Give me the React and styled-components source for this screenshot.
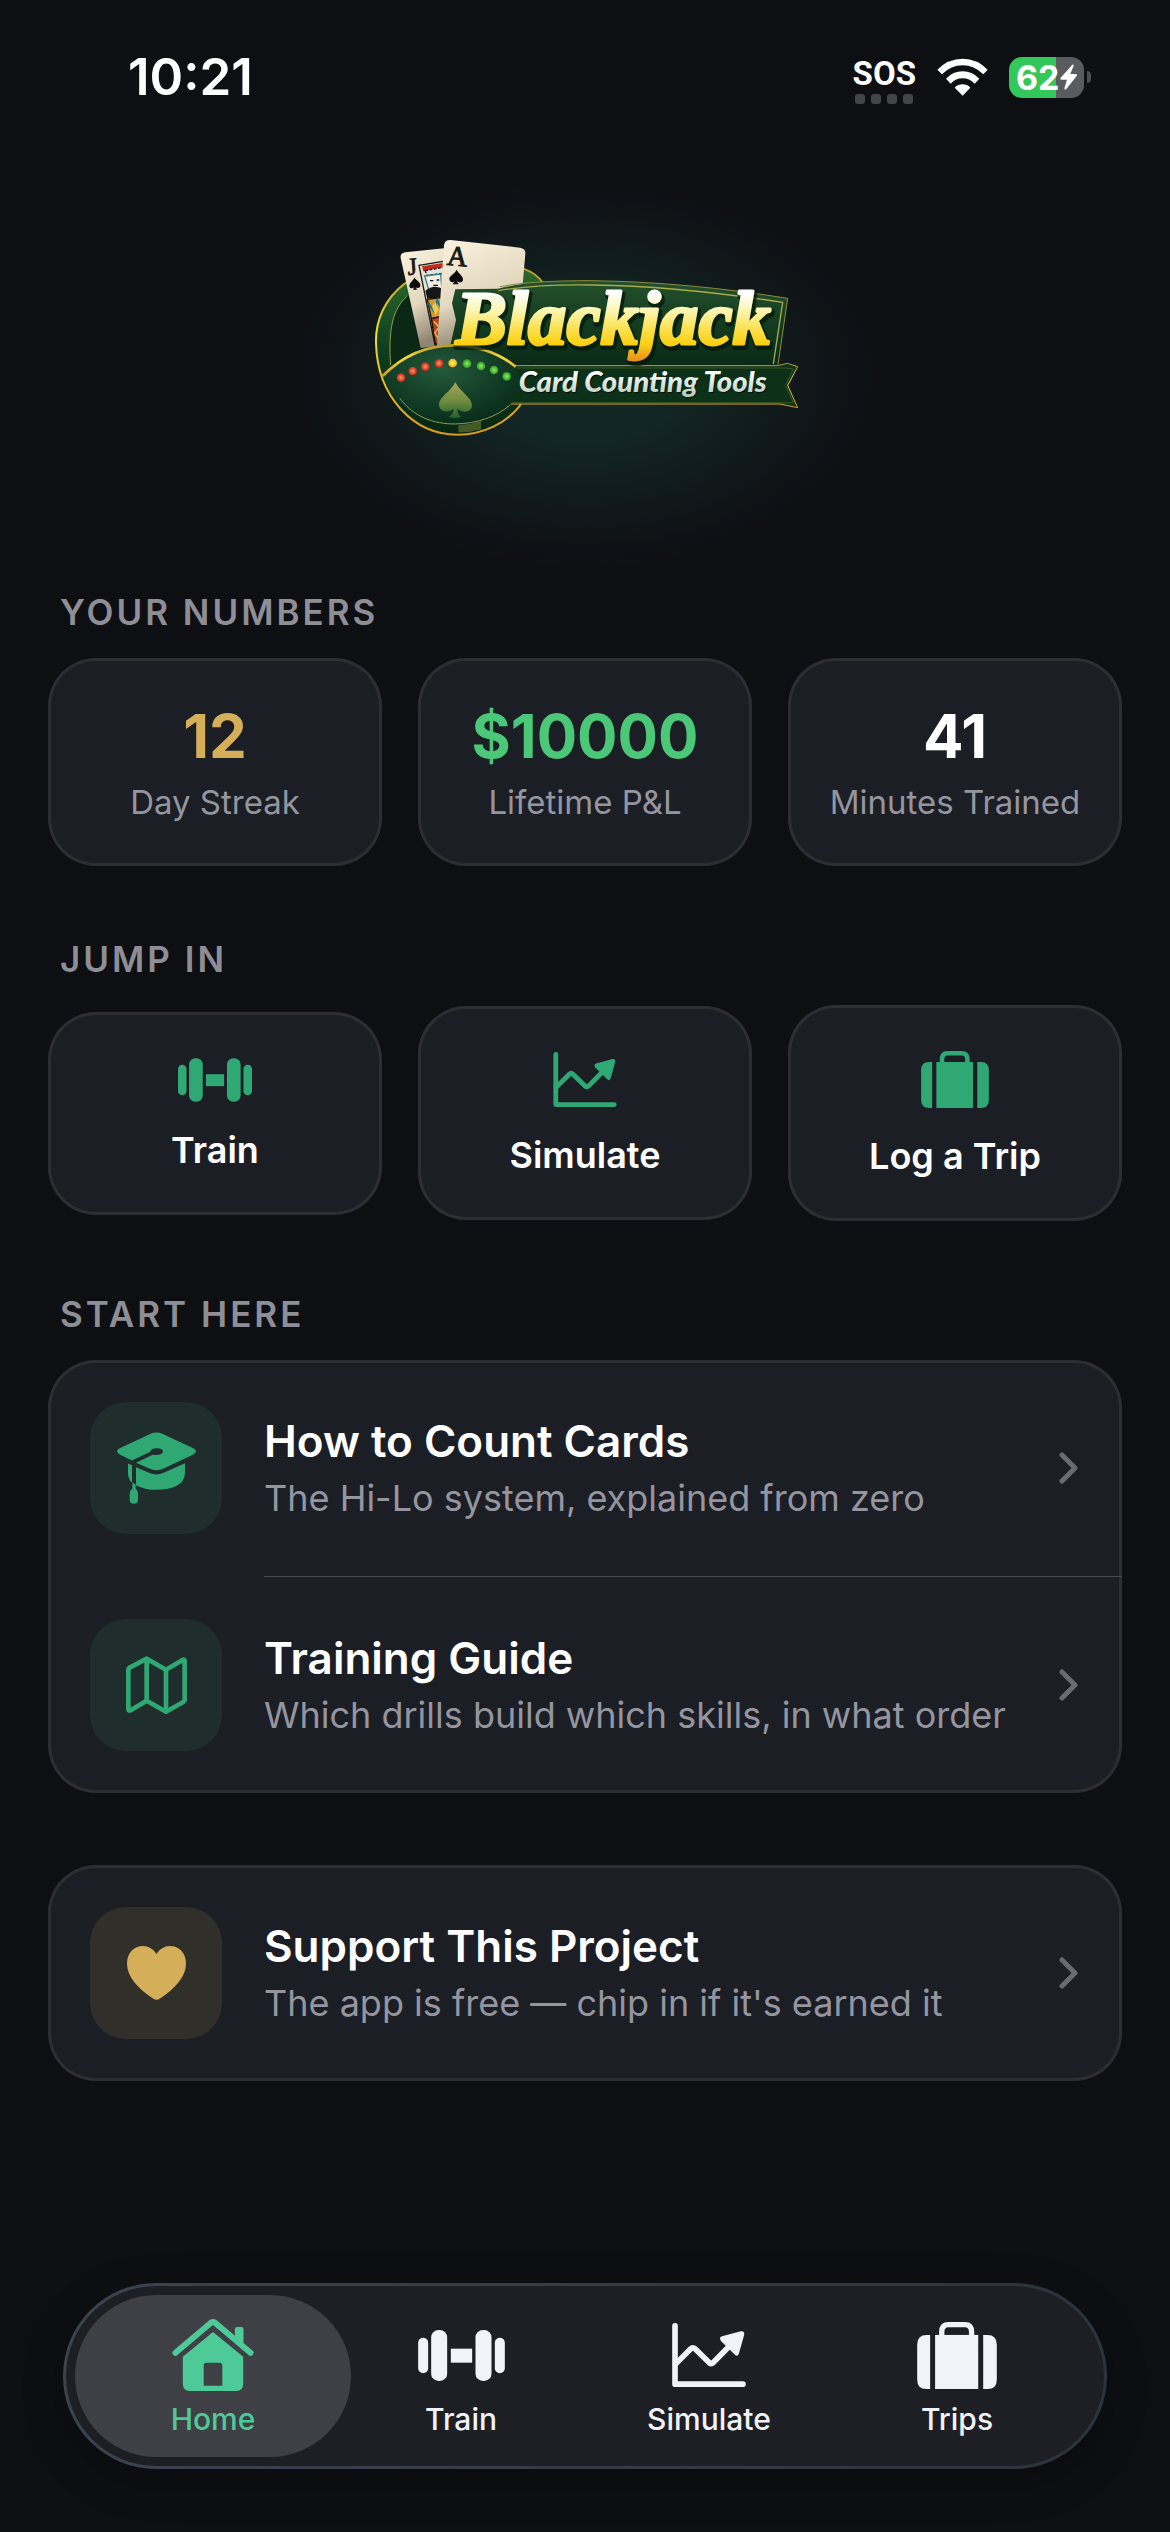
import React, { memo } from 'react';
import styled, { createGlobalStyle } from 'styled-components';

const COLOR = {
  page: '#0e0f13',
  card: '#1c1e26',
  line: '#2c2e32',
  divider: '#47494c',
  muted: '#95959f',
  label: '#8e8e96',
  white: '#ffffff',
  green: '#2fa874',
  profit: '#4ac777',
  gold: '#d4ae58',
};

const GlobalStyle = createGlobalStyle`
  * {
    box-sizing: border-box;
  }

  body {
    margin: 0;
    background: ${COLOR.page};
    color: ${COLOR.white};
    font-family: Inter, Roboto, 'Liberation Sans', sans-serif;
  }

  button {
    font: inherit;
    color: inherit;
    border: 0;
    cursor: pointer;
  }

  a {
    color: inherit;
    text-decoration: none;
  }

  h1, h2, p {
    margin: 0;
  }

  svg {
    display: block;
    flex: none;
  }
`;

const Page = styled.div`
  min-height: 100vh;
  display: flex;
  flex-direction: column;
`;

/* ---------- status bar ---------- */

const StatusBar = styled.header`
  height: 154px;
  padding: 0 79px 0 128px;
  display: flex;
  align-items: center;
  justify-content: space-between;
`;

const Clock = styled.time`
  font-size: 51px;
  font-weight: 600;
  line-height: 60px;
`;

const StatusIcons = styled.div`
  display: flex;
  align-items: center;
  gap: 21px;
`;

const Signal = styled.div`
  padding-top: 6px;
  display: flex;
  flex-direction: column;
  align-items: center;
  gap: 3px;
  font-family: 'Liberation Sans Narrow', Roboto, sans-serif;
  font-size: 33px;
  font-weight: 700;
  line-height: 34px;
`;

const SignalDots = styled.div`
  display: flex;
  gap: 6px;

  i {
    width: 10px;
    height: 10px;
    border-radius: 3px;
    background: #444549;
  }
`;

const Battery = styled.div`
  display: flex;
  align-items: center;
  gap: 3px;

  &::after {
    content: '';
    width: 4px;
    height: 12px;
    border-radius: 0 4px 4px 0;
    background: #4c4d51;
  }
`;

const BatteryBody = styled.div`
  width: 75px;
  height: 41px;
  padding-left: 7px;
  display: flex;
  align-items: center;
  border-radius: 13px;
  background: linear-gradient(to right, #34c759 63%, #5a5b5f 63%);
  font-size: 34px;
  font-weight: 700;
  line-height: 41px;
`;

/* ---------- content ---------- */

const Hero = styled.div`
  height: 437px;
  padding-top: 66px;
  display: flex;
  justify-content: center;
  align-items: flex-start;
  background: radial-gradient(
    ellipse 310px 200px at 50% 220px,
    rgba(32, 100, 84, 0.3) 0%,
    rgba(32, 100, 84, 0.25) 35%,
    rgba(32, 100, 84, 0.12) 65%,
    rgba(32, 100, 84, 0.03) 88%,
    rgba(32, 100, 84, 0) 100%
  );
`;

const Content = styled.main`
  padding: 0 48px;
  display: flex;
  flex-direction: column;
  gap: 72px;
`;

const SectionTitle = styled.h2`
  margin: 0 0 24px 12px;
  color: ${COLOR.label};
  font-size: 35px;
  font-weight: 600;
  line-height: 43px;
  letter-spacing: 3px;
`;

const Columns = styled.div`
  display: grid;
  grid-template-columns: repeat(3, minmax(0, 1fr));
  align-items: center;
  gap: 36px;
`;

const cardBase = `
  border-radius: 48px;
  background: ${COLOR.card};
  box-shadow: inset 0 0 0 3px ${COLOR.line};
`;

const StatCard = styled.div`
  ${cardBase}
  padding: 42px 0 44px;
  text-align: center;
`;

const StatValue = styled.p`
  margin-bottom: 10px;
  color: ${(props) => props.$color};
  font-size: 60px;
  font-weight: 700;
  line-height: 72px;
`;

const StatLabel = styled.p`
  color: ${COLOR.muted};
  font-size: 33px;
  line-height: 40px;
`;

const ActionCard = styled.button`
  ${cardBase}
  padding: 46px 0 43px;
  display: flex;
  flex-direction: column;
  align-items: center;
  gap: 27px;
  color: ${COLOR.green};

  span {
    color: ${COLOR.white};
    font-size: 36px;
    font-weight: 600;
    line-height: 43px;
  }
`;

const ListCard = styled.div`
  ${cardBase}
`;

const Divider = styled.div`
  height: 1px;
  margin-left: 216px;
  background: ${COLOR.divider};
`;

const Row = styled.a`
  padding: 42px 44px 42px 42px;
  display: flex;
  align-items: center;
  gap: 42px;
`;

const Tile = styled.span`
  width: 132px;
  height: 132px;
  flex: none;
  display: flex;
  align-items: center;
  justify-content: center;
  border-radius: 36px;
  color: ${(props) => (props.$tone === 'gold' ? COLOR.gold : COLOR.green)};
  background: ${(props) => (props.$tone === 'gold' ? '#312f29' : '#1f2d2d')};
`;

const RowText = styled.span`
  flex: 1;
  min-width: 0;
  display: flex;
  flex-direction: column;
  gap: 4px;

  strong {
    font-size: 44px;
    font-weight: 600;
    line-height: 56px;
  }

  small {
    color: ${COLOR.muted};
    font-size: 36px;
    line-height: 50px;
  }
`;

/* ---------- tab bar ---------- */

const TabBar = styled.nav`
  position: sticky;
  bottom: 63px;
  margin: auto 63px 63px;
  padding: 9px 23px;
  display: grid;
  grid-template-columns: repeat(4, minmax(0, 1fr));
  border: 3px solid transparent;
  border-radius: 93px;
  background:
    linear-gradient(#1e1f24, #1e1f24) padding-box,
    linear-gradient(to right, #3b4350, #333a45 60%, #2d333d) border-box;
  box-shadow: 0 12px 40px rgba(0, 0, 0, 0.25);
`;

const TabItem = styled.a`
  height: 162px;
  margin: 0 -14px;
  padding-top: 24px;
  display: flex;
  flex-direction: column;
  align-items: center;
  gap: 10px;
  border-radius: 81px;
  color: ${(props) => (props.$active ? '#4ec998' : '#f1f3f9')};
  background: ${(props) => (props.$active ? '#3f4045' : 'transparent')};
  font-size: 30px;
  font-weight: 500;
  line-height: 36px;
`;

const TabIcon = styled.span`
  height: 72px;
  display: flex;
  align-items: center;
`;

/* ---------- icons ---------- */

const DumbbellIcon = ({ width, height }) => (
  <svg width={width} height={height} viewBox="0 0 260 153" fill="currentColor" aria-hidden="true">
    <rect x="0" y="23" width="30" height="107" rx="15" />
    <rect x="39" y="0" width="48" height="153" rx="22" />
    <rect x="98" y="56" width="64" height="42" />
    <rect x="172" y="0" width="48" height="153" rx="22" />
    <rect x="230" y="23" width="30" height="107" rx="15" />
  </svg>
);

const ChartIcon = ({ width, height }) => (
  <svg width={width} height={height} viewBox="0 0 222 193" aria-hidden="true">
    <g fill="none" stroke="currentColor" strokeWidth="17" strokeLinecap="round" strokeLinejoin="round">
      <path d="M8.500 8.500V184.500H213.500" />
      <path d="M10 124L56 78Q62 71 69 78L112 120Q118 125 124 119L172 70" />
    </g>
    <path
      d="M150 40L207 25Q219 23 217 36L201 93Q197 103 189 96L147 54Q140 44 150 40Z"
      fill="currentColor"
    />
  </svg>
);

const SuitcaseIcon = ({ width, height }) => (
  <svg width={width} height={height} viewBox="0 0 240 202" fill="currentColor" aria-hidden="true">
    <path d="M39 39V202H28Q0 202 0 174V68Q0 39 28 39Z" />
    <path d="M199 39V202H212Q240 202 240 174V68Q240 39 212 39Z" />
    <rect x="54" y="39" width="130" height="163" />
    <path d="M74 43V30Q74 8 94 8H144Q164 8 164 30V43" fill="none" stroke="currentColor" strokeWidth="16" />
  </svg>
);

const HomeIcon = () => (
  <svg width="82" height="72" viewBox="0 0 246 217" fill="currentColor" aria-hidden="true">
    <path
      fillRule="evenodd"
      d="M123 39L214 114V195Q214 217 192 217H54Q32 217 32 195V114ZM103 132Q95 132 95 140V201H151V140Q151 132 143 132Z"
    />
    <path
      d="M10 102L116 12Q123 7 130 12L236 102"
      fill="none"
      stroke="currentColor"
      strokeWidth="18"
      strokeLinecap="round"
      strokeLinejoin="round"
    />
    <path d="M189 54V31Q189 24 196 24H208Q215 24 215 31V80Z" />
  </svg>
);

const GradCapIcon = () => (
  <svg width="79" height="72" viewBox="0 0 237 215" fill="currentColor" aria-hidden="true">
    <path d="M101 5Q118 -3 136 5L229 48Q245 57 229 67L140 109Q118 119 97 109L57 92L107 68Q138 70 138 57Q137 48 118 48Q101 48 100 59L45 85L8 67Q-8 57 8 48Z" />
    <path d="M57 105L96 122Q118 132 140 122L204 93V121Q204 150 175 163Q150 173 118 173Q82 173 57 159Z" />
    <path d="M33 94L45 99V152Q33 140 33 124Z" />
    <path d="M46 150L56 158V170Q63 175 63 183V203Q63 215 51 215Q38 215 38 203V183Q38 175 46 170Z" />
  </svg>
);

const MapIcon = () => (
  <svg
    width="61"
    height="58"
    viewBox="0 0 183 174"
    fill="none"
    stroke="currentColor"
    strokeWidth="14"
    strokeLinejoin="round"
    aria-hidden="true"
  >
    <path d="M7 41Q7 38 11 35L62 8L120 41L170 12Q176 8 176 16V131Q176 135 172 138L120 167L62 134L14 163Q7 166 7 158Z" />
    <path d="M62 8V134M120 41V167" />
  </svg>
);

const HeartIcon = () => (
  <svg width="59" height="54" viewBox="0 0 59 54" fill="currentColor" aria-hidden="true">
    <path d="M29.500 8C32.500 3 37.500 0 43 0C52 0 59 7 59 17.500C59 31 48 42.500 33 52.500Q29.500 55 26 52.500C11 42.500 0 31 0 17.500C0 7 7 0 16 0C21.500 0 26.500 3 29.500 8Z" />
  </svg>
);

const ChevronIcon = () => (
  <svg
    width="19"
    height="32"
    viewBox="0 0 19 32"
    fill="none"
    stroke="#696b72"
    strokeWidth="5"
    strokeLinecap="round"
    strokeLinejoin="round"
    aria-hidden="true"
  >
    <path d="M3 3L16 16L3 29" />
  </svg>
);

const WifiIcon = () => (
  <svg width="51" height="38" viewBox="288 55 153 114" fill="#fff" aria-label="Wi-Fi">
    <path d="M289 90Q321 57 365 57Q408 57 440 90L427 104Q399 77 365 77Q330 77 303 104Z" />
    <path d="M315 117Q336 95 365 95Q393 95 415 117L401 132Q385 116 365 116Q344 116 329 132Z" />
    <path d="M341 144Q351 134 365 134Q378 134 388 144L365 168Z" />
  </svg>
);

const BoltIcon = () => (
  <svg width="17" height="26" viewBox="0 0 51 76" fill="#fff" aria-label="charging">
    <path d="M37 1L2 40Q-1 45 4 46H21L13 72Q14 79 19 74L50 35Q53 30 47 29H31L41 4Q41 -1 37 1Z" />
  </svg>
);

const COUNT_LIGHTS = [
  { x: 153, y: 473, tone: 'red' },
  { x: 188, y: 453, tone: 'red' },
  { x: 226, y: 440, tone: 'red' },
  { x: 267, y: 430, tone: 'red' },
  { x: 308, y: 429, tone: 'yellow' },
  { x: 351, y: 431, tone: 'lime' },
  { x: 393, y: 438, tone: 'lime' },
  { x: 432, y: 450, tone: 'lime' },
  { x: 470, y: 469, tone: 'lime' },
];

const Light = ({ id, from, to }) => (
  <radialGradient id={id}>
    <stop offset="0" stopColor={from} />
    <stop offset="1" stopColor={to} />
  </radialGradient>
);

const Logo = () => (
  <svg width="470" height="230" viewBox="0 0 1410 690" role="img" aria-label="Blackjack Card Counting Tools">
    <defs>
      <linearGradient id="gold" x1="0" y1="0" x2="0" y2="1">
        <stop offset="0" stopColor="#b89a2c" />
        <stop offset="0.4" stopColor="#f3dc3e" />
        <stop offset="1" stopColor="#d99a1c" />
      </linearGradient>
      <linearGradient id="word" gradientUnits="userSpaceOnUse" x1="0" y1="220" x2="0" y2="420">
        <stop offset="0" stopColor="#ffffff" />
        <stop offset="0.25" stopColor="#fbf6b4" />
        <stop offset="0.55" stopColor="#fbe04a" />
        <stop offset="0.76" stopColor="#fbd013" />
        <stop offset="1" stopColor="#e8921c" />
      </linearGradient>
      <linearGradient id="silver" gradientUnits="userSpaceOnUse" x1="0" y1="455" x2="0" y2="530">
        <stop offset="0" stopColor="#ffffff" />
        <stop offset="1" stopColor="#b9cabd" />
      </linearGradient>
      <linearGradient id="rim" x1="0" y1="0" x2="0" y2="1">
        <stop offset="0" stopColor="#2c6a2c" />
        <stop offset="0.5" stopColor="#0f3d1d" />
        <stop offset="1" stopColor="#062713" />
      </linearGradient>
      <radialGradient id="felt" cx="0.45" cy="0.3" r="0.7">
        <stop offset="0" stopColor="#24593a" />
        <stop offset="0.6" stopColor="#123c25" />
        <stop offset="1" stopColor="#082b18" />
      </radialGradient>
      <linearGradient id="board" x1="0" y1="0" x2="0" y2="1">
        <stop offset="0" stopColor="#24502a" />
        <stop offset="0.5" stopColor="#143c20" />
        <stop offset="1" stopColor="#0a2a17" />
      </linearGradient>
      <linearGradient id="paper" x1="0" y1="0" x2="0.3" y2="1">
        <stop offset="0" stopColor="#fbf3df" />
        <stop offset="0.6" stopColor="#e3d8c0" />
        <stop offset="1" stopColor="#8f8672" />
      </linearGradient>
      <linearGradient id="spade" x1="0" y1="0" x2="0" y2="1">
        <stop offset="0" stopColor="#a6a55c" />
        <stop offset="0.55" stopColor="#6c8b3f" />
        <stop offset="1" stopColor="#1f6130" />
      </linearGradient>
      <Light id="red" from="#f59a62" to="#c8231a" />
      <Light id="yellow" from="#fff07a" to="#e9b411" />
      <Light id="lime" from="#8df05c" to="#2b9a25" />
    </defs>

    {/* table rim */}
    <path
      d="M582 192C565 168 548 156 525 148L330 140L165 190C105 235 76 300 78 370C82 530 190 644 322 644C400 644 470 608 509 558L560 420Z"
      fill="url(#rim)"
      stroke="url(#gold)"
      strokeWidth="6"
    />
    <path d="M172 228C128 265 114 330 122 435L330 380L560 300V200L400 180Z" fill="#0b2816" />
    <path d="M172 228C128 265 114 330 122 435" fill="none" stroke="#8aa04a" strokeWidth="3" />

    {/* jack */}
    <path d="M166 97L290 84L300 372L212 384L152 114Q150 99 166 97Z" fill="url(#paper)" />
    <path d="M207 136L285 123V375H255Z" fill="#e9e2cc" stroke="#1a1a1a" strokeWidth="4" />
    <path d="M216 139L284 128V148L220 154Z" fill="#c3291c" />
    <path d="M226 152L280 142V160L230 166Z" fill="#dfe3dc" stroke="#111" strokeWidth="4" strokeDasharray="8 5" />
    <path d="M224 168L272 162L276 212L238 214Z" fill="#f4efe2" stroke="#2e7f96" strokeWidth="4" />
    <path d="M240 182H250M260 180H268M250 196H264" stroke="#111" strokeWidth="4" />
    <path d="M226 212Q252 190 282 208L278 234L232 236Z" fill="#151515" />
    <path d="M232 238L280 232V290L244 296Z" fill="#d29a35" stroke="#111" strokeWidth="4" />
    <path d="M236 250L252 274L262 240L276 276" fill="none" stroke="#24708b" strokeWidth="6" />
    <path d="M246 260L256 246L266 270L256 286Z" fill="#f2c84c" />
    <path d="M244 296L278 288L264 372H256Z" fill="#b5401e" stroke="#111" strokeWidth="4" />
    <path d="M252 304L268 322L254 338L264 356" fill="none" stroke="#e7b23c" strokeWidth="5" />
    <text
      x="172"
      y="164"
      fontFamily="'Liberation Serif', serif"
      fontSize="74"
      fontWeight="400"
      fill="#17150f"
      stroke="#17150f"
      strokeWidth="2"
      transform="rotate(-4 186 140)"
    >
      J
    </text>
    <path
      d="M193 172C200 184 214 188 211 198C208 206 200 205 197 200L201 209H189L193 201C188 207 179 206 178 198C178 188 190 184 193 172Z"
      fill="#0c0c0c"
    />

    {/* ace */}
    <path d="M302 60L510 83Q528 86 526 102L517 205L330 230L310 376L261 378L282 76Q284 59 302 60Z" fill="url(#paper)" />
    <text
      x="292"
      y="137"
      fontFamily="'Liberation Serif', serif"
      fontSize="84"
      fontWeight="400"
      fill="#1b1914"
      stroke="#1b1914"
      strokeWidth="3"
      transform="rotate(5 320 110)"
    >
      A
    </text>
    <path
      d="M320 149C326 162 341 168 339 180C336 190 326 188 321 184L326 193H308L314 184C309 189 299 187 298 177C298 166 314 162 320 149Z"
      fill="#0c0c0c"
    />

    {/* name board */}
    <path
      d="M316 208L444 206C520 186 620 182 720 182C920 184 1120 204 1313 235L1283 436H490L300 382L318 300L306 250Z"
      fill="url(#board)"
    />
    <path
      d="M450 200C520 186 620 182 720 182C920 184 1120 204 1313 235L1284 434"
      fill="none"
      stroke="#8d8a3e"
      strokeWidth="3"
    />
    <path
      d="M445 212C540 196 640 193 730 195C920 198 1110 218 1298 247L1270 432"
      fill="none"
      stroke="#a8ab4e"
      strokeWidth="4"
    />

    {/* ribbon */}
    <path
      d="M480 437H1283L1312 430L1343 440L1313 496L1343 563L1290 552H468Z"
      fill="#0d3018"
      stroke="url(#gold)"
      strokeWidth="3"
    />
    <path d="M480 444H1308L1330 447L1306 497L1330 548H480" fill="none" stroke="#4e6a2c" strokeWidth="2" />

    {/* felt */}
    <path
      d="M98 468C160 405 235 376 310 376C385 377 450 402 500 442C512 490 500 525 480 556C440 600 385 620 320 620C230 618 140 570 98 468Z"
      fill="url(#felt)"
    />
    <path d="M98 468C160 405 235 376 310 376C385 377 450 402 497 440" fill="none" stroke="url(#gold)" strokeWidth="8" />
    <path d="M150 535C190 590 250 612 316 612C385 610 440 590 480 555" fill="none" stroke="#8a9c55" strokeWidth="3" />
    <path d="M325 616Q360 614 393 603V628Q360 638 325 637Z" fill="#6f7a36" opacity="0.6" />
    {COUNT_LIGHTS.map((light) => (
      <circle key={light.x} cx={light.x} cy={light.y} r="13" fill={`url(#${light.tone})`} />
    ))}
    <path
      d="M316 486C328 514 366 532 366 556C366 578 338 580 322 566C322 578 326 584 333 590Q316 598 296 590C306 584 311 578 311 566C295 580 267 576 267 554C267 530 304 514 316 486Z"
      fill="url(#spade)"
    />

    {/* wordmark */}
    <g fontFamily="'Liberation Serif', serif" fontSize="230" fontWeight="700" fontStyle="italic">
      <text x="322" y="380" fill="#04160b" stroke="#04160b" strokeWidth="18" strokeLinejoin="round" opacity="0.7">
        Blackjack
      </text>
      <text x="317" y="372" fill="url(#word)" stroke="url(#word)" strokeWidth="9" strokeLinejoin="round">
        Blackjack
      </text>
    </g>
    <g fontFamily="Lato, 'Open Sans', sans-serif" fontSize="88" fontWeight="900" fontStyle="italic">
      <text x="509" y="520" fill="#03120a">
        Card Counting Tools
      </text>
      <text x="506" y="516" fill="url(#silver)">
        Card Counting Tools
      </text>
    </g>
  </svg>
);

const STATS = [
  { label: 'Day Streak', value: '12', color: COLOR.gold },
  { label: 'Lifetime P&L', value: '$10000', color: COLOR.profit },
  { label: 'Minutes Trained', value: '41', color: COLOR.white },
];

const ACTIONS = [
  { label: 'Train', icon: <DumbbellIcon width={74} height={44} /> },
  { label: 'Simulate', icon: <ChartIcon width={64} height={55} /> },
  { label: 'Log a Trip', icon: <SuitcaseIcon width={68} height={57} /> },
];

const TABS = [
  { label: 'Home', icon: <HomeIcon /> },
  { label: 'Train', icon: <DumbbellIcon width={87} height={51} /> },
  { label: 'Simulate', icon: <ChartIcon width={74} height={64} /> },
  { label: 'Trips', icon: <SuitcaseIcon width={80} height={67} /> },
];

const LinkRow = ({ icon, title, text, tone }) => (
  <Row href="#">
    <Tile $tone={tone}>{icon}</Tile>
    <RowText>
      <strong>{title}</strong>
      <small>{text}</small>
    </RowText>
    <ChevronIcon />
  </Row>
);

const App = () => {
  const activeTab = 'Home';

  return (
    <Page>
      <GlobalStyle />
      <StatusBar>
        <Clock>10:21</Clock>
        <StatusIcons>
          <Signal>
            SOS
            <SignalDots>
              <i />
              <i />
              <i />
              <i />
            </SignalDots>
          </Signal>
          <WifiIcon />
          <Battery>
            <BatteryBody>
              62
              <BoltIcon />
            </BatteryBody>
          </Battery>
        </StatusIcons>
      </StatusBar>

      <Hero>
        <Logo />
      </Hero>

      <Content>
        <section>
          <SectionTitle>YOUR NUMBERS</SectionTitle>
          <Columns>
            {STATS.map((stat) => (
              <StatCard key={stat.label}>
                <StatValue $color={stat.color}>{stat.value}</StatValue>
                <StatLabel>{stat.label}</StatLabel>
              </StatCard>
            ))}
          </Columns>
        </section>

        <section>
          <SectionTitle>JUMP IN</SectionTitle>
          <Columns>
            {ACTIONS.map((action) => (
              <ActionCard key={action.label} type="button">
                {action.icon}
                <span>{action.label}</span>
              </ActionCard>
            ))}
          </Columns>
        </section>

        <section>
          <SectionTitle>START HERE</SectionTitle>
          <ListCard>
            <LinkRow icon={<GradCapIcon />} title="How to Count Cards" text="The Hi-Lo system, explained from zero" />
            <Divider />
            <LinkRow icon={<MapIcon />} title="Training Guide" text="Which drills build which skills, in what order" />
          </ListCard>
        </section>

        <ListCard>
          <LinkRow
            tone="gold"
            icon={<HeartIcon />}
            title="Support This Project"
            text="The app is free — chip in if it's earned it"
          />
        </ListCard>
      </Content>

      <TabBar>
        {TABS.map((tab) => (
          <TabItem key={tab.label} href="#" $active={tab.label === activeTab}>
            <TabIcon>{tab.icon}</TabIcon>
            {tab.label}
          </TabItem>
        ))}
      </TabBar>
    </Page>
  );
};

export default memo(App);
